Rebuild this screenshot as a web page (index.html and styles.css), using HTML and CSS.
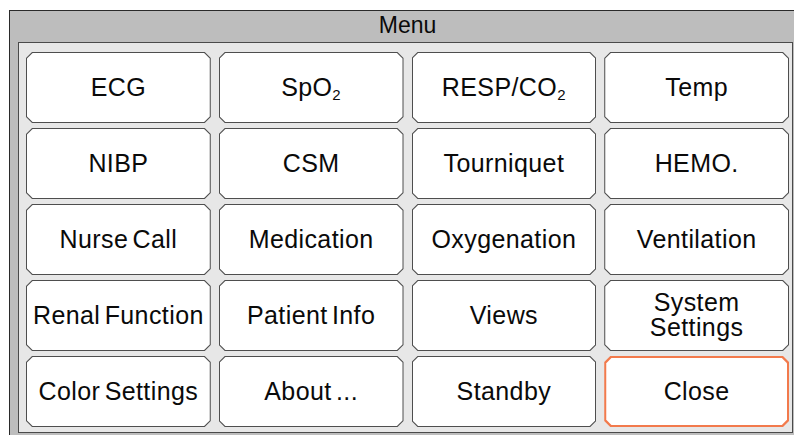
FILE: index.html
```html
<!DOCTYPE html>
<html>
<head>
<meta charset="utf-8">
<link rel="stylesheet" href="styles.css">
</head>
<body>
<div class="dialog">
  <div class="title">Menu</div>
  <div class="content">
    <div class="grid">
      <div class="btn"><div class="face">ECG</div></div>
      <div class="btn"><div class="face">SpO<span class="sub">2</span></div></div>
      <div class="btn"><div class="face">RESP/CO<span class="sub">2</span></div></div>
      <div class="btn"><div class="face">Temp</div></div>
      <div class="btn"><div class="face">NIBP</div></div>
      <div class="btn"><div class="face">CSM</div></div>
      <div class="btn"><div class="face">Tourniquet</div></div>
      <div class="btn"><div class="face">HEMO.</div></div>
      <div class="btn"><div class="face">Nurse Call</div></div>
      <div class="btn"><div class="face">Medication</div></div>
      <div class="btn"><div class="face">Oxygenation</div></div>
      <div class="btn"><div class="face">Ventilation</div></div>
      <div class="btn"><div class="face">Renal Function</div></div>
      <div class="btn"><div class="face">Patient Info</div></div>
      <div class="btn"><div class="face">Views</div></div>
      <div class="btn"><div class="face two">System<br>Settings</div></div>
      <div class="btn"><div class="face">Color Settings</div></div>
      <div class="btn"><div class="face">About ...</div></div>
      <div class="btn"><div class="face">Standby</div></div>
      <div class="btn close"><div class="face">Close</div></div>
    </div>
  </div>
</div>
</body>
</html>
```

FILE: styles.css
```css
html, body {
  margin: 0;
  padding: 0;
  background: #ffffff;
  overflow: hidden;
  width: 794px;
  height: 435px;
}

.dialog {
  margin: 10px 0 0 9px;
  width: 800px;
  border-top: 1px solid #2a2a2a;
  border-left: 1px solid #2a2a2a;
  background: #bdbdbd;
  padding: 0 0 10px 8px;
  font-family: "Liberation Sans", Arial, sans-serif;
  color: #0a0a0a;
}

.title {
  width: 775px;
  height: 31px;
  line-height: 28px;
  font-size: 23px;
  text-align: center;
  padding-left: 4px;
  box-sizing: border-box;
}

.content {
  width: 773px;
  height: 389px;
  border: 1px solid #4a4a4a;
  background: #e7e7e7;
  box-sizing: content-box;
  padding: 0;
}

.grid {
  display: grid;
  grid-template-columns: repeat(4, 1fr);
  grid-template-rows: repeat(5, 71px);
  column-gap: 8px;
  row-gap: 5px;
  padding: 9px 3px 5px 7px;
}

.btn {
  background: #4e4e4e;
  padding: 1px;
  clip-path: polygon(6px 0, calc(100% - 6px) 0, 100% 6px, 100% calc(100% - 6px), calc(100% - 6px) 100%, 6px 100%, 0 calc(100% - 6px), 0 6px);
}

.face {
  height: 100%;
  background: #ffffff;
  clip-path: polygon(5.6px 0, calc(100% - 5.6px) 0, 100% 5.6px, 100% calc(100% - 5.6px), calc(100% - 5.6px) 100%, 5.6px 100%, 0 calc(100% - 5.6px), 0 5.6px);
  display: flex;
  align-items: center;
  justify-content: center;
  text-align: center;
  font-size: 25px;
  letter-spacing: 0.4px;
  word-spacing: -3px;
  white-space: nowrap;
}

.face.two {
  line-height: 25px;
  padding-bottom: 1px;
  box-sizing: border-box;
}

.sub {
  font-size: 15px;
  position: relative;
  top: 7px;
}

.btn.close {
  background: #f27a4c;
  padding: 2px;
}

.btn.close .face {
  clip-path: polygon(5.2px 0, calc(100% - 5.2px) 0, 100% 5.2px, 100% calc(100% - 5.2px), calc(100% - 5.2px) 100%, 5.2px 100%, 0 calc(100% - 5.2px), 0 5.2px);
}
```
